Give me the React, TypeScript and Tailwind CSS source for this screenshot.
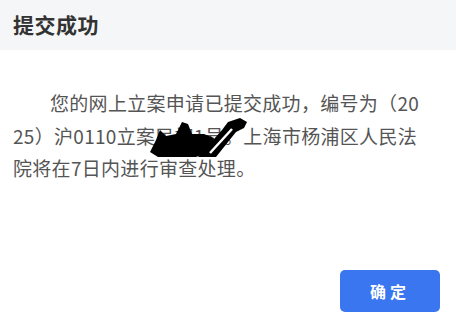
import React from "react";

const font = '"Noto Sans CJK SC", "Noto Sans", sans-serif';

export default function App() {
  return (
    <div className="relative w-[456px] h-[320px] bg-white flex flex-col" style={{ fontFamily: font }}>
      <div className="h-[50px] bg-[#f5f6f8] flex items-center px-[13px]">
        <span className="text-[21px] font-bold text-[#333] tracking-[0.5px]">提交成功</span>
      </div>
      <div className="pl-[13px] pr-[29px] pt-[37px] flex-1">
        <p className="text-[19px] leading-[32.5px] text-[#555] tracking-[0.3px] indent-[37px] break-all">
          您的网上立案申请已提交成功，编号为（2025）沪0110立案民初1号。上海市杨浦区人民法院将在7日内进行审查处理。
        </p>
      </div>
      <svg className="absolute left-0 top-0 pointer-events-none" width="456" height="320" viewBox="0 0 456 320">
        <path d="M150 152 L156 140 L160 130 L166 136 L176 134 L182 122 L188 124 L192 134 L204 134 L214 138 L210 152 L196 157 L158 157 Z" fill="#000" />
        <path d="M198 157 L222 130 L228 122 L240 118 L247 122 L244 128 L236 132 L216 157 Z" fill="#000" />
        <path d="M210 153 L232 129" stroke="#fff" strokeWidth="2.5" />
      </svg>
      <div className="absolute right-[16px] bottom-[8px]">
        <button className="w-[100px] h-[42px] rounded-[5px] bg-[#3a76f0] text-white text-[16px] font-bold tracking-[4px]">
          确定
        </button>
      </div>
    </div>
  );
}
